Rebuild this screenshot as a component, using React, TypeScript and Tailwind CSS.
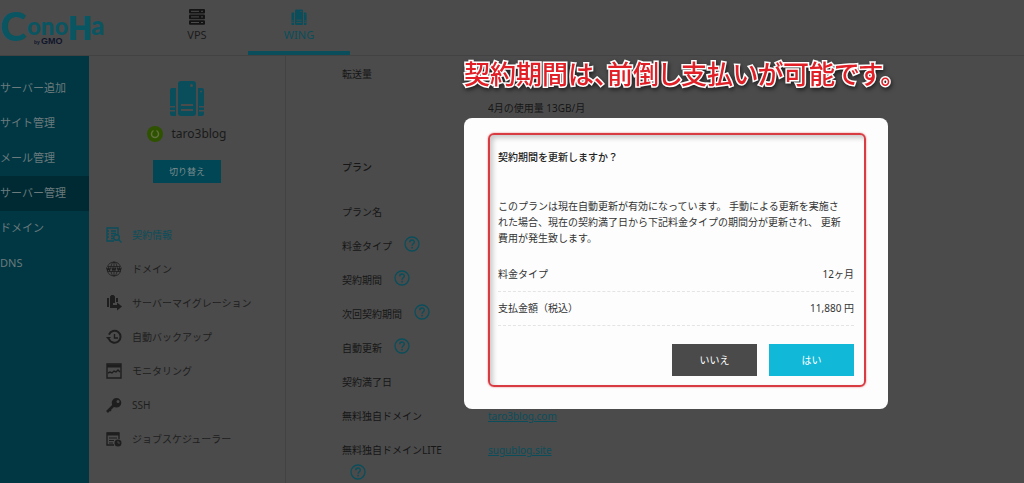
import type { ReactNode } from 'react';

const sideItems = ['サーバー追加', 'サイト管理', 'メール管理', 'サーバー管理', 'ドメイン', 'DNS'];

const stroke = {
  fill: 'none',
  stroke: 'currentColor',
  strokeWidth: 1.4,
};

const menuItems: { name: string; icon: ReactNode }[] = [
  {
    name: '契約情報',
    icon: (
      <g {...stroke}>
        <path d="M8 14H1V1h11v7M1 4h2M1 7h2M1 10h2M5 4h5M5 6.500h5M5 9h2M5 11.500h2" />
        <circle cx="10.500" cy="10.500" r="2.800" />
        <path d="M12.500 12.500l3 3" />
      </g>
    ),
  },
  {
    name: 'ドメイン',
    icon: (
      <g {...stroke} strokeWidth={0.8}>
        <path d="M1.500 5.500a7 7 0 0 1 13 0M1.500 10.500a7 7 0 0 0 13 0" />
        <path d="M5 5.500C5.500 3 6.500 1 8 1s2.500 2 3 4.500M5 10.500C5.500 13 6.500 15 8 15s2.500-2 3-4.500M8 1v4.500M8 10.500V15M1.500 5.500h13M1.500 10.500h13" />
        <path
          d="M0.500 6.500l1 3 1-2.500 1 2.500 1-3M5.900 6.500l1 3 1-2.500 1 2.500 1-3M11.300 6.500l1 3 1-2.500 1 2.500 1-3"
          strokeWidth={1.1}
        />
      </g>
    ),
  },
  {
    name: 'サーバーマイグレーション',
    icon: (
      <g fill="currentColor">
        <path d="M1 3h2v9H1zM4 1.500L5.500 0h2L9 1.500V8H7v5H4zM10 3h2v4h-2z" />
        <path d="M5 10h6V7.500l5 4-5 4V13H5z" />
      </g>
    ),
  },
  {
    name: '自動バックアップ',
    icon: (
      <g {...stroke} strokeWidth={2}>
        <path d="M3 10A6 6 0 1 0 3 5.500" />
        <path d="M8.500 5v4H12" strokeWidth={1.4} />
        <path d="M0 8h5l-2.500 3z" fill="currentColor" stroke="none" />
      </g>
    ),
  },
  {
    name: 'モニタリング',
    icon: (
      <g {...stroke}>
        <path d="M1 1h14v14H1z" />
        <path d="M1 3h14" strokeWidth={3} />
        <path d="M2 10l2-1 2 1 2-2 2 1 2-2 2 2" />
      </g>
    ),
  },
  {
    name: 'SSH',
    icon: (
      <g>
        <path
          fillRule="evenodd"
          fill="currentColor"
          d="M10.500 1a4.800 4.800 0 1 1 0 9.600 4.800 4.800 0 0 1 0-9.600zm1.500 2a1.500 1.500 0 1 0 0 3 1.500 1.500 0 0 0 0-3z"
        />
        <path d="M8 8l-7 7" stroke="currentColor" strokeWidth="2.600" />
        <path d="M3 12l2 2" stroke="currentColor" strokeWidth="1.500" />
      </g>
    ),
  },
  {
    name: 'ジョブスケジューラー',
    icon: (
      <g {...stroke}>
        <path d="M8 14H1V2h12v6" />
        <path d="M1 3h12" strokeWidth={3} />
        <path d="M3 7h8M3 9.500h5M3 12h4" strokeWidth={1} />
        <circle cx="12" cy="12" r="3.500" fill="currentColor" stroke="none" />
        <path d="M12 10v2h2" stroke="#4b4b4b" strokeWidth={0.8} />
      </g>
    ),
  },
];

type Row = { label: string; help?: boolean; link?: string };

const planRows: Row[] = [
  { label: 'プラン名' },
  { label: '料金タイプ', help: true },
  { label: '契約期間', help: true },
  { label: '次回契約期間', help: true },
  { label: '自動更新', help: true },
  { label: '契約満了日' },
  { label: '無料独自ドメイン', link: 'taro3blog.com' },
  { label: '無料独自ドメインLITE', help: true, link: 'sugublog.site' },
];

const Logo = () => (
  <svg
    width="112"
    height="44"
    viewBox="0 0 112 44"
    className="overflow-visible"
    role="img"
    aria-label="ConoHa by GMO"
  >
    <g className="fill-[#0a5562] font-['Lato'] font-black">
      <text x="0" y="33" fontSize="40">C</text>
      <text x="27" y="27" fontSize="24">ono</text>
      <text x="68" y="32" fontSize="34" className="font-['Roboto'] font-black">H</text>
      <text x="91" y="27" fontSize="26">a</text>
    </g>
    <g className="fill-[#10152c] font-['Liberation_Sans'] font-bold">
      <text x="34" y="36" fontSize="5">by</text>
      <text x="41" y="36" fontSize="9">GMO</text>
    </g>
  </svg>
);

const ServerStack = ({ className }: { className: string }) => (
  <svg viewBox="0 0 36 36" className={className} fill="currentColor" aria-hidden="true">
    <path d="M3 8h4v28H3q-2 0-2-2V10q0-2 2-2zM29 8h4q2 0 2 2v24q0 2-2 2h-4z" />
    <rect x="9" y="1" width="18" height="35" rx="3" />
    <g fill="#4b4b4b">
      <circle cx="22.500" cy="5.500" r="1.500" />
      <circle cx="32" cy="11.500" r="1" />
      <path d="M12 24h12v2H12zM12 29h12v2H12zM1 26h5v1.500H1zM1 30h5v1.500H1zM30 26h5v1.500h-5zM30 30h5v1.500h-5z" />
    </g>
  </svg>
);

const VpsIcon = () => (
  <svg viewBox="0 0 16 16" className="size-4 text-[#141414]" aria-hidden="true">
    <g fill="currentColor">
      <rect x="0" y="0" width="16" height="4.600" rx="1" />
      <rect x="0" y="5.600" width="16" height="4.600" rx="1" />
      <rect x="0" y="11.200" width="16" height="4.600" rx="1" />
    </g>
    <path d="M2 2.300h8M2 7.900h8M2 13.500h8M12 2.300h2M12 7.900h2M12 13.500h2" stroke="#4b4b4b" />
  </svg>
);

const HelpIcon = () => (
  <svg viewBox="0 0 16 16" className="size-4 text-[#0a4e5b]" role="img" aria-label="ヘルプ">
    <circle cx="8" cy="8" r="7" fill="none" stroke="currentColor" strokeWidth="1.300" />
    <path
      d="M5.700 6.300c0-3 4.600-3 4.600-.2 0 1.700-2.200 1.700-2.200 3.600"
      fill="none"
      stroke="currentColor"
      strokeWidth="1.500"
    />
    <circle cx="8.100" cy="11.700" r="0.900" fill="currentColor" />
  </svg>
);

const Header = () => (
  <header className="flex h-14 border-b border-[#424242]">
    <div className="w-[146px] pt-2">
      <Logo />
    </div>
    <nav className="flex text-[11px] leading-4">
      <a href="#vps" className="flex w-[102px] flex-col items-center gap-[2px] pt-[9px] text-[#1c1c1c]">
        <VpsIcon />
        VPS
      </a>
      <a
        href="#wing"
        className="flex w-[102px] flex-col items-center gap-[2px] border-b-4 border-[#0a4e5b] pt-[9px] text-[#0a4e5b]"
      >
        <ServerStack className="size-4" />
        WING
      </a>
    </nav>
  </header>
);

const Sidebar = () => (
  <nav className="w-[89px] shrink-0 bg-[#003743] pt-[15px] text-[11px] text-[#6a7a7d]">
    {sideItems.map((item) => (
      <a
        key={item}
        href="#"
        className={
          item === 'サーバー管理'
            ? 'flex h-[35px] items-center bg-[#002a33]'
            : 'flex h-[35px] items-center'
        }
      >
        {item}
      </a>
    ))}
  </nav>
);

const ServicePanel = () => (
  <aside className="w-[197px] shrink-0 border-r border-[#424242]">
    <div className="flex flex-col items-center pt-6">
      <ServerStack className="size-9 text-[#0a4e5b]" />
      <div className="mt-2 flex items-center gap-2 text-[12px] leading-5 text-[#1a1a1a]">
        <svg viewBox="0 0 16 16" className="size-4" aria-hidden="true">
          <circle cx="8" cy="8" r="8" fill="#2f5200" />
          <circle cx="8" cy="8" r="3.500" fill="none" stroke="#62703f" strokeWidth="1.500" />
          <path d="M8 3v4" stroke="#2f5200" strokeWidth="3" />
        </svg>
        taro3blog
      </div>
      <button className="mt-4 h-[23px] w-[68px] bg-[#004654] text-[9px] text-[#7c8c8f]">切り替え</button>
    </div>
    <nav className="mt-[35px] text-[10px] text-[#1e1e1e]">
      {menuItems.map((item) => (
        <a
          key={item.name}
          href="#"
          className={
            item.name === '契約情報'
              ? 'flex h-[34px] items-center gap-[10px] pl-[17px] text-[#0a4e5b]'
              : 'flex h-[34px] items-center gap-[10px] pl-[17px]'
          }
        >
          <svg viewBox="0 0 16 16" className="size-4" aria-hidden="true">
            {item.icon}
          </svg>
          {item.name}
        </a>
      ))}
    </nav>
  </aside>
);

const ContractDetail = () => (
  <main className="flex-1 pl-14 text-[10px] leading-4 text-[#161616]">
    <dl>
      <dt className="pt-[10px]">転送量</dt>
      <dd className="pt-[18px] pl-[146px]">4月の使用量 13GB/月</dd>
    </dl>
    <h2 className="mt-[43px] mb-5 font-medium">プラン</h2>
    <dl>
      {planRows.map((row) => (
        <div key={row.label} className="flex min-h-[34px] pt-[9px]">
          <dt className="flex w-[146px] flex-wrap content-start items-start gap-x-3">
            {row.label}
            {row.help && (
              <span className={row.label.endsWith('LITE') ? 'mt-[6px] w-full pl-2' : '-mt-[2px]'}>
                <HelpIcon />
              </span>
            )}
          </dt>
          <dd>
            {row.link && (
              <a href="#" className="text-[#0a4e5b] underline">
                {row.link}
              </a>
            )}
          </dd>
        </div>
      ))}
    </dl>
  </main>
);

const RenewDialog = () => (
  <div
    role="dialog"
    aria-labelledby="renew-title"
    className="rounded-lg bg-[#fdfdfd] pt-[15px] pr-[22px] pb-[22px] pl-6 text-[10px] text-[#333]"
  >
    <div className="rounded-md border-2 border-[#d83c42] pt-[14px] pr-[10px] pb-[9px] pl-2 shadow-[inset_3px_3px_5px_rgba(0,0,0,0.2),0_0_2px_#e8777b]">
      <h2 id="renew-title" className="leading-4 font-medium text-[#222]">
        契約期間を更新しますか？
      </h2>
      <p className="mt-[33px] leading-4">
        このプランは現在自動更新が有効になっています。 手動による更新を実施さ
        <br />
        れた場合、現在の契約満了日から下記料金タイプの期間分が更新され、 更新
        <br />
        費用が発生致します。
      </p>
      <dl className="mt-3">
        <div className="flex h-[34px] items-center justify-between border-b border-dashed border-[#e4e4e4]">
          <dt>料金タイプ</dt>
          <dd>12ヶ月</dd>
        </div>
        <div className="flex h-[34px] items-center justify-between border-b border-dashed border-[#e4e4e4]">
          <dt>支払金額（税込）</dt>
          <dd>11,880 円</dd>
        </div>
      </dl>
      <div className="mt-[18px] flex justify-end gap-3 text-white">
        <button className="h-8 w-[85px] bg-[#4a4a4a]">いいえ</button>
        <button className="h-8 w-[85px] bg-[#11b8d8]">はい</button>
      </div>
    </div>
  </div>
);

export default function App() {
  return (
    <div className="relative h-screen overflow-hidden bg-[#4b4b4b] font-['Noto_Sans','Noto_Sans_CJK_JP',sans-serif]">
      <div className="flex min-h-screen flex-col">
        <Header />
        <div className="flex flex-1">
          <Sidebar />
          <ServicePanel />
          <ContractDetail />
        </div>
      </div>

      <div className="absolute inset-0 flex flex-col items-end pt-[54px] pr-[136px]">
        <div className="w-[424px]">
          <p className="mb-6 h-10 text-[26px] leading-10 font-medium whitespace-nowrap text-[#e01f26] [-webkit-text-stroke:3px_#fff] [font-feature-settings:'palt'] [paint-order:stroke_fill] drop-shadow-[1px_2px_2px_rgba(0,0,0,0.6)]">
            契約期間は、前倒し支払いが可能です。
          </p>
          <RenewDialog />
        </div>
      </div>
    </div>
  );
}
